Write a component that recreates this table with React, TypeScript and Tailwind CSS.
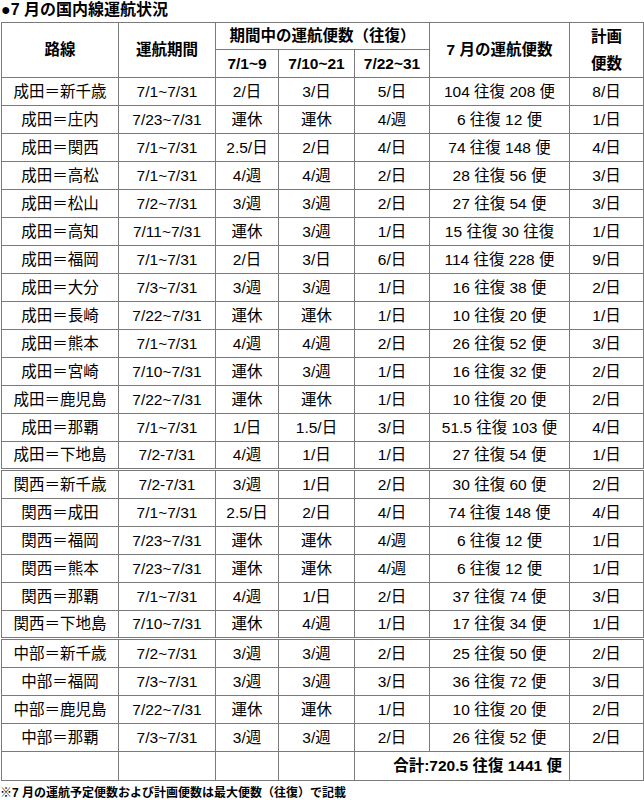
const rows: string[][] = [
  ["成田＝新千歳", "7/1~7/31", "2/日", "3/日", "5/日", "104 往復 208 便", "8/日"],
  ["成田＝庄内", "7/23~7/31", "運休", "運休", "4/週", "6 往復 12 便", "1/日"],
  ["成田＝関西", "7/1~7/31", "2.5/日", "2/日", "4/日", "74 往復 148 便", "4/日"],
  ["成田＝高松", "7/1~7/31", "4/週", "4/週", "2/日", "28 往復 56 便", "3/日"],
  ["成田＝松山", "7/2~7/31", "3/週", "3/週", "2/日", "27 往復 54 便", "3/日"],
  ["成田＝高知", "7/11~7/31", "運休", "3/週", "1/日", "15 往復 30 往復", "1/日"],
  ["成田＝福岡", "7/1~7/31", "2/日", "3/日", "6/日", "114 往復 228 便", "9/日"],
  ["成田＝大分", "7/3~7/31", "3/週", "3/週", "1/日", "16 往復 38 便", "2/日"],
  ["成田＝長崎", "7/22~7/31", "運休", "運休", "1/日", "10 往復 20 便", "1/日"],
  ["成田＝熊本", "7/1~7/31", "4/週", "4/週", "2/日", "26 往復 52 便", "3/日"],
  ["成田＝宮崎", "7/10~7/31", "運休", "3/週", "1/日", "16 往復 32 便", "2/日"],
  ["成田＝鹿児島", "7/22~7/31", "運休", "運休", "1/日", "10 往復 20 便", "2/日"],
  ["成田＝那覇", "7/1~7/31", "1/日", "1.5/日", "3/日", "51.5 往復 103 便", "4/日"],
  ["成田＝下地島", "7/2-7/31", "4/週", "1/日", "1/日", "27 往復 54 便", "1/日"],
  ["関西＝新千歳", "7/2-7/31", "3/週", "1/日", "2/日", "30 往復 60 便", "2/日"],
  ["関西＝成田", "7/1~7/31", "2.5/日", "2/日", "4/日", "74 往復 148 便", "4/日"],
  ["関西＝福岡", "7/23~7/31", "運休", "運休", "4/週", "6 往復 12 便", "1/日"],
  ["関西＝熊本", "7/23~7/31", "運休", "運休", "4/週", "6 往復 12 便", "1/日"],
  ["関西＝那覇", "7/1~7/31", "4/週", "1/日", "2/日", "37 往復 74 便", "3/日"],
  ["関西＝下地島", "7/10~7/31", "運休", "4/週", "1/日", "17 往復 34 便", "1/日"],
  ["中部＝新千歳", "7/2~7/31", "3/週", "3/週", "2/日", "25 往復 50 便", "2/日"],
  ["中部＝福岡", "7/3~7/31", "3/週", "3/週", "3/日", "36 往復 72 便", "3/日"],
  ["中部＝鹿児島", "7/22~7/31", "運休", "運休", "1/日", "10 往復 20 便", "2/日"],
  ["中部＝那覇", "7/3~7/31", "3/週", "3/週", "2/日", "26 往復 52 便", "2/日"],
];

// rows that start a new airport group get a double rule on top
const groupStarts = [14, 20];

const cell = "border border-[#7a7a7a] text-center align-middle p-0";

export default function App() {
  return (
    <div
      className="w-[644px] h-[800px] bg-white text-black overflow-hidden"
      style={{ fontFamily: '"Liberation Sans", "Noto Sans CJK JP", sans-serif' }}
    >
      <div className="h-[22px] pl-[1px] pt-[1px] text-[16px] leading-[18px] font-bold">●7 月の国内線運航状況</div>

      <table className="table-fixed border-collapse w-[642px] ml-[1px] text-[15.5px] leading-none">
        <colgroup>
          <col className="w-[117px]" />
          <col className="w-[97px]" />
          <col className="w-[63px]" />
          <col className="w-[76px]" />
          <col className="w-[75px]" />
          <col className="w-[140px]" />
          <col className="w-[74px]" />
        </colgroup>
        <thead className="font-bold">
          <tr className="h-[27px]">
            <th rowSpan={2} className={cell}>路線</th>
            <th rowSpan={2} className={cell}>運航期間</th>
            <th colSpan={3} className={cell}>期間中の運航便数（往復）</th>
            <th rowSpan={2} className={cell}>7 月の運航便数</th>
            <th rowSpan={2} className={cell + " leading-[27px]"}>
              計画
              <br />
              便数
            </th>
          </tr>
          <tr className="h-[28px]">
            <th className={cell}>7/1~9</th>
            <th className={cell}>7/10~21</th>
            <th className={cell}>7/22~31</th>
          </tr>
        </thead>
        <tbody>
          {rows.map((r, i) => (
            <tr
              key={i}
              className={
                groupStarts.includes(i)
                  ? "h-[29px] border-t-[3px] border-double border-t-[#7a7a7a]"
                  : "h-[28px]"
              }
            >
              {r.map((v, j) => (
                <td key={j} className={cell}>
                  {v}
                </td>
              ))}
            </tr>
          ))}
          <tr className="h-[29px]">
            <td className={cell}></td>
            <td className={cell}></td>
            <td className={cell}></td>
            <td className={cell}></td>
            <td colSpan={2} className={cell + " text-right pr-[7px] font-bold"}>
              合計:720.5 往復 1441 便
            </td>
            <td className={cell}></td>
          </tr>
        </tbody>
      </table>

      <div className="pt-[5px] text-[12px] leading-[14px] font-bold">
        ※7 月の運航予定便数および計画便数は最大便数（往復）で記載
      </div>
    </div>
  );
}
